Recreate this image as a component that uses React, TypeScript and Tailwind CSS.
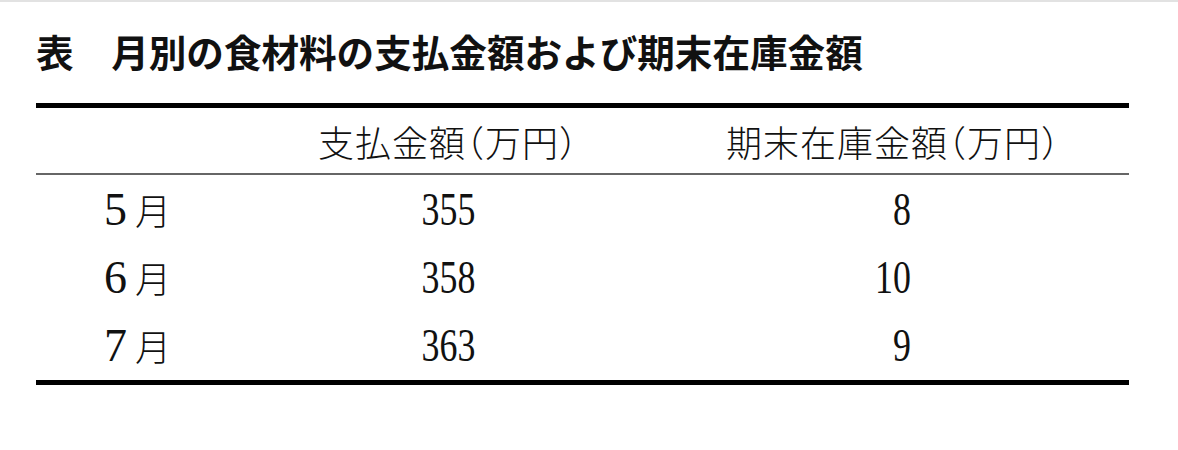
import React from 'react';

type Row = {
  month: string;
  pay: string;
  stock: string;
};

const rows: Row[] = [
  { month: '5', pay: '355', stock: '8' },
  { month: '6', pay: '358', stock: '10' },
  { month: '7', pay: '363', stock: '9' },
];

export default function App() {
  return (
    <div className="min-h-screen bg-white border-t-2 border-[#e2e2e2] text-[#111]">
      <div className="pl-[36px] pt-[30px]">
        {/* title */}
        <h1 className="h-[38px] text-[37.6px] leading-[38px] font-bold whitespace-nowrap [font-family:'Noto_Sans_CJK_JP',sans-serif]">
          表　月別の食材料の支払金額および期末在庫金額
        </h1>

        {/* table */}
        <div className="mt-[33px] w-[1093px] border-t-[5px] border-b-[5px] border-black">
          <div className="grid grid-cols-[203px_418px_472px] h-[67px] items-center border-b-2 border-[#666] text-[36px] leading-none font-light tracking-[1px] [font-family:'Noto_Sans_CJK_JP',sans-serif] [font-feature-settings:'halt']">
            <div />
            <div className="text-center whitespace-nowrap">支払金額（万円）</div>
            <div className="text-center whitespace-nowrap">期末在庫金額（万円）</div>
          </div>

          <div className="pt-[1px]">
            {rows.map((r) => (
              <div key={r.month} className="grid grid-cols-[203px_418px_472px] h-[68px] items-center">
                <div className="flex justify-center items-baseline">
                  <span className="text-[46px] leading-none [font-family:'Liberation_Serif',serif]">{r.month}</span>
                  <span className="ml-[8px] text-[36px] leading-none font-light [font-family:'Noto_Sans_CJK_JP',sans-serif]">月</span>
                </div>
                <div className="flex justify-center">
                  <span className="inline-block scale-x-[0.78] text-[46px] leading-none [font-family:'Liberation_Serif',serif]">
                    {r.pay}
                  </span>
                </div>
                <div className="flex justify-center">
                  <span className="inline-block w-[46px] text-right scale-x-[0.78] text-[46px] leading-none [font-family:'Liberation_Serif',serif]">
                    {r.stock}
                  </span>
                </div>
              </div>
            ))}
          </div>
        </div>
      </div>
    </div>
  );
}
